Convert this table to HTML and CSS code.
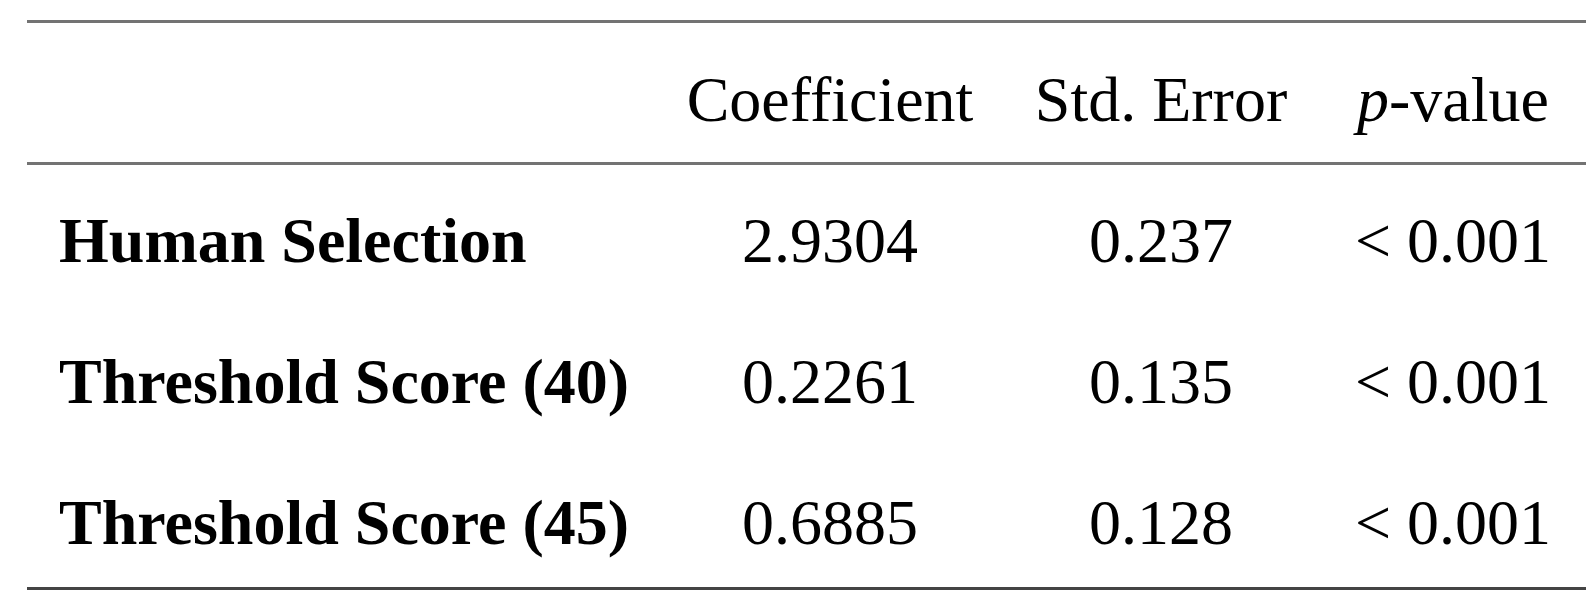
FILE: index.html
```html
<!DOCTYPE html>
<html lang="en">
<head>
  <meta charset="UTF-8" />
  <meta name="viewport" content="width=device-width, initial-scale=1.0" />
  <title>Regression Results</title>
  <link rel="stylesheet" href="styles.css">
</head>
<body>
  <table class="results">
    <colgroup>
      <col class="col-label" />
      <col class="col-coef" />
      <col class="col-err" />
      <col class="col-p" />
    </colgroup>
    <thead>
      <tr>
        <th></th>
        <th>Coefficient</th>
        <th>Std. Error</th>
        <th><i>p</i>-value</th>
      </tr>
    </thead>
    <tbody>
      <tr>
        <td class="label">Human Selection</td>
        <td>2.9304</td>
        <td>0.237</td>
        <td>&lt; 0.001</td>
      </tr>
      <tr>
        <td class="label">Threshold Score (40)</td>
        <td>0.2261</td>
        <td>0.135</td>
        <td>&lt; 0.001</td>
      </tr>
      <tr>
        <td class="label">Threshold Score (45)</td>
        <td>0.6885</td>
        <td>0.128</td>
        <td>&lt; 0.001</td>
      </tr>
    </tbody>
  </table>
</body>
</html>
```

FILE: styles.css
```css
* {
  margin: 0;
  padding: 0;
  box-sizing: border-box;
}

body {
  background: #fff;
  color: #000;
  font-family: 'Liberation Serif', 'Times New Roman', serif;
}

.results {
  margin: 20px 0 0 27px;
  width: 1559px;
  table-layout: fixed;
  border-collapse: collapse;
  font-size: 64px;
  line-height: 64px;
}

.col-label { width: 631px; }
.col-coef { width: 344px; }
.col-err { width: 318px; }
.col-p { width: 266px; }

thead {
  border-top: 3px solid #737373;
  border-bottom: 3px solid #737373;
}

tbody {
  border-bottom: 3px solid #444;
}

th,
td {
  text-align: center;
  font-weight: normal;
  white-space: nowrap;
  padding: 77px 0 0;
}

th {
  padding: 45px 0 30px;
}

tbody tr:first-child td {
  padding-top: 44px;
}

tbody tr:last-child td {
  padding-bottom: 32px;
}

td.label {
  text-align: left;
  font-weight: bold;
  padding-left: 32px;
}
```
